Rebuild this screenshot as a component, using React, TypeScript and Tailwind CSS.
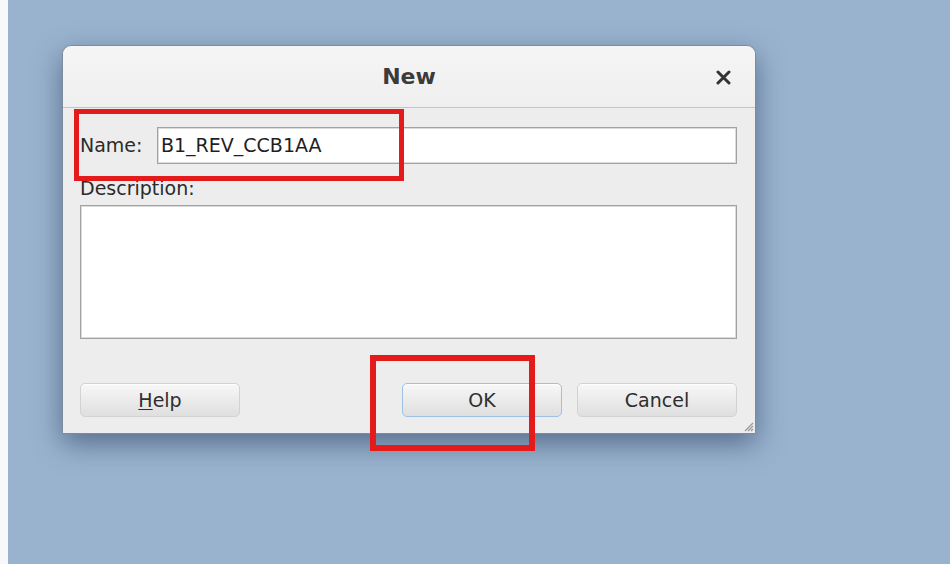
import React from 'react';

const font = { fontFamily: '"DejaVu Sans", "Liberation Sans", sans-serif' };

function DialogButton({ label, underline, focused = false }: { label: string; underline?: number; focused?: boolean }) {
  return (
    <button
      className={`h-[34px] w-[160px] rounded-[5px] border bg-gradient-to-b from-[#f8f8f8] via-[#ebebeb] to-[#dfdfdf] text-[19px] text-[#2e2e2e] shadow-[0_1px_0_rgba(255,255,255,0.8)_inset] ${
        focused ? 'border-[#9cc0e6]' : 'border-[#d2d2d2]'
      }`}
    >
      {underline === undefined ? (
        label
      ) : (
        <>
          {label.slice(0, underline)}
          <span className="underline underline-offset-2">{label[underline]}</span>
          {label.slice(underline + 1)}
        </>
      )}
    </button>
  );
}

export default function App() {
  return (
    <div className="relative flex h-[564px] w-[950px] overflow-hidden" style={font}>
      <div className="w-[8px] shrink-0 bg-[#f7f8f9]" />
      <div className="flex-1 bg-[#99b3cf] pl-[54px] pt-[45px]">
        {/* dialog window */}
        <div className="relative flex h-[389px] w-[694px] flex-col rounded-t-[9px] border border-[#7e8b9a] bg-[#ededed] shadow-[0_10px_28px_rgba(35,55,85,0.55)]">
          <div className="relative flex h-[62px] shrink-0 items-center justify-center rounded-t-[9px] border-b border-[#c4c4c4] bg-gradient-to-b from-[#f5f5f5] to-[#efefef]">
            <span className="text-[22px] font-bold text-[#3b3b3b]">New</span>
            <svg className="absolute right-[24px] top-[24px]" width="15" height="15" viewBox="0 0 15 15">
              <path d="M2 2 L13 13 M13 2 L2 13" stroke="#333" strokeWidth="3" strokeLinecap="round" />
            </svg>
          </div>

          <div className="flex flex-1 flex-col pl-[17px] pr-[18px] pt-[19px]">
            <div className="flex items-center">
              <span className="w-[77px] text-[19px] text-[#2b2b2b]">Name:</span>
              <div className="flex h-[37px] flex-1 items-center border border-[#a2a2a2] bg-white pl-[3px] text-[19px] text-[#1f1f1f] shadow-[inset_0_0_0_1px_#dcdcdc]">
                B1_REV_CCB1AA
              </div>
            </div>

            <span className="mt-[13px] text-[19px] leading-[23px] text-[#2b2b2b]">Description:</span>
            <div className="mt-[5px] h-[134px] border border-[#a2a2a2] bg-white shadow-[inset_0_0_0_1px_#dcdcdc]" />

            <div className="mt-[44px] flex items-center">
              <DialogButton label="Help" underline={0} />
              <div className="flex-1" />
              <DialogButton label="OK" focused />
              <div className="w-[15px]" />
              <DialogButton label="Cancel" />
            </div>
          </div>

          {/* resize grip */}
          <svg className="absolute bottom-[1px] right-[1px]" width="12" height="12" viewBox="0 0 12 12">
            <path d="M11 3 L3 11 M11 6 L6 11 M11 9 L9 11" stroke="#9a9a9a" strokeWidth="1.2" />
          </svg>
        </div>
      </div>

      {/* red highlight boxes */}
      <div className="pointer-events-none absolute left-[74px] top-[109px] h-[72px] w-[330px] border-[5px] border-[#e31b1b]" />
      <div className="pointer-events-none absolute left-[370px] top-[355px] h-[96px] w-[165px] border-[6px] border-[#e31b1b]" />
    </div>
  );
}
